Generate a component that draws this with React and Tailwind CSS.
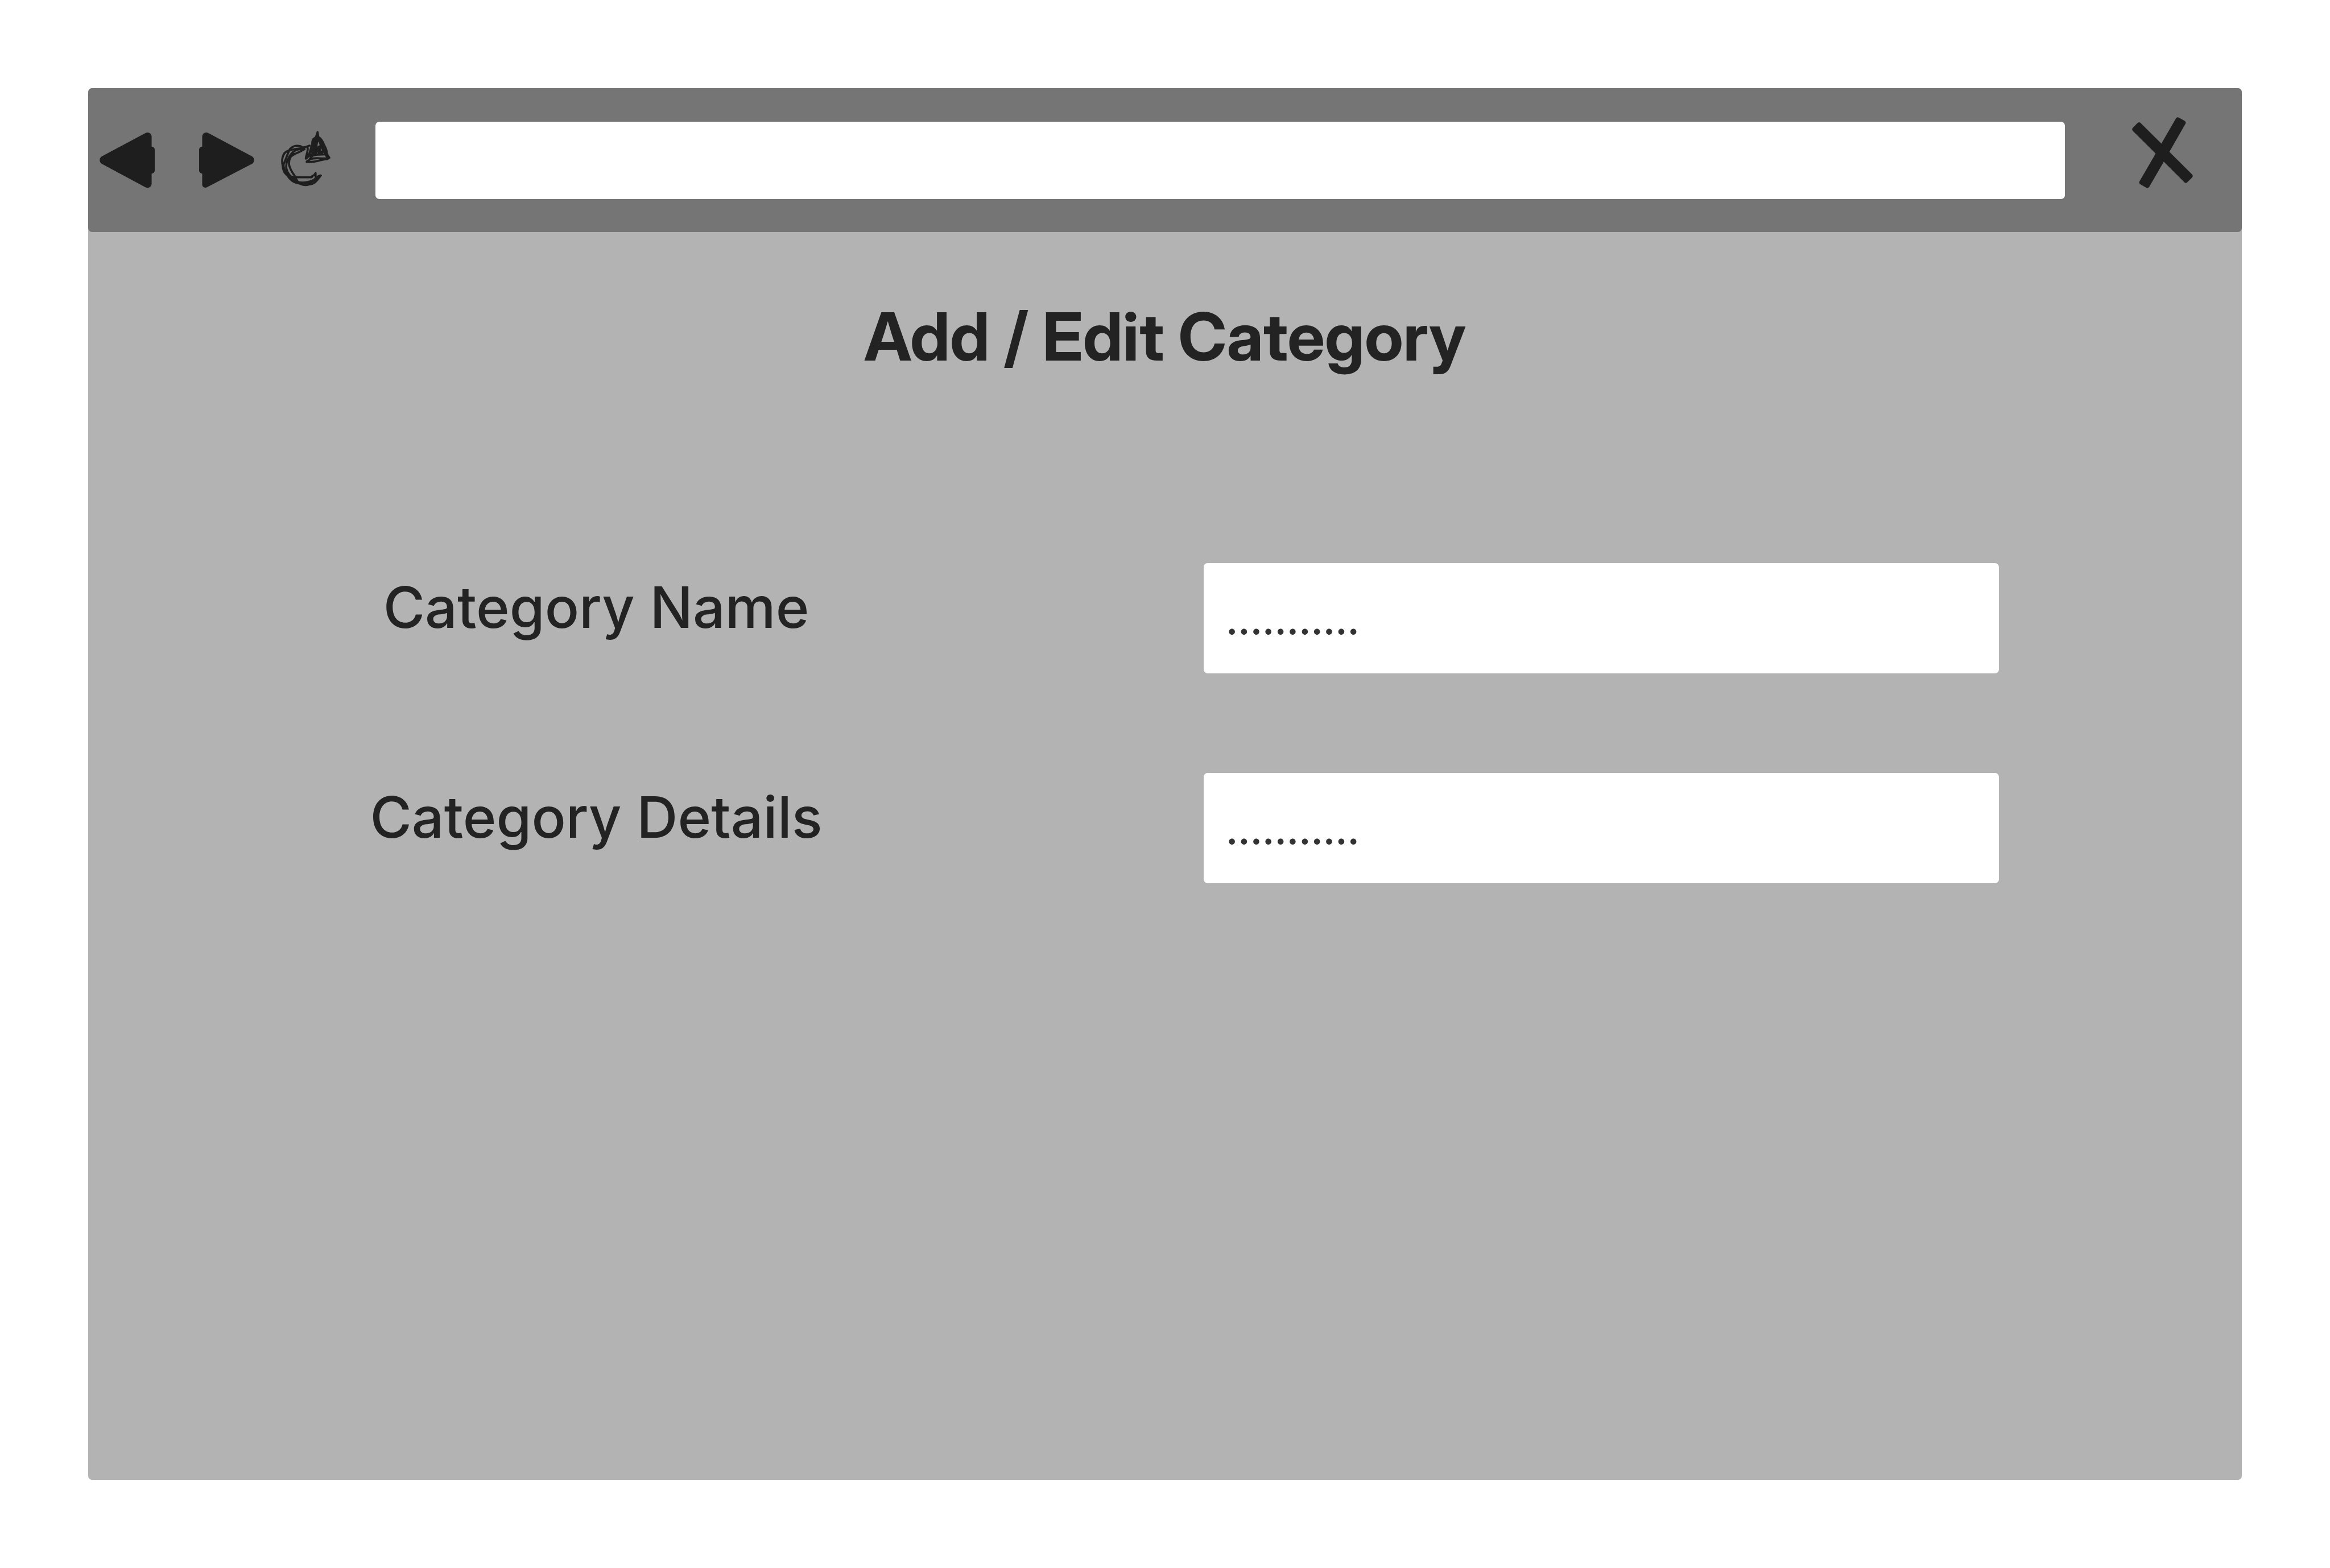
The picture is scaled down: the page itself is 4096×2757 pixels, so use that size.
import React from "react";

function BackIcon() {
  return (
    <svg viewBox="144 432 480 480" className="h-[97px] w-[97px]" fill="currentColor" aria-hidden="true">
      <path d="M543 437 L163 640 A38 38 0 0 0 163 704 L543 908 A36 36 0 0 0 597 878 V789 A27 27 0 0 0 624 764 V580 A27 27 0 0 0 597 554 V465 A36 36 0 0 0 543 437Z" />
    </svg>
  );
}

function ForwardIcon() {
  return (
    <svg viewBox="1008 432 480 480" className="h-[97px] w-[97px]" fill="currentColor" aria-hidden="true">
      <path d="M1089 437 L1469 640 A38 38 0 0 1 1469 704 L1076 908 A27 27 0 0 1 1035 886 V789 A27 27 0 0 1 1008 764 V580 A27 27 0 0 1 1035 554 V465 A36 36 0 0 1 1089 437Z" />
    </svg>
  );
}

function ReloadIcon() {
  return (
    <svg
      viewBox="100 110 432 524"
      className="h-[106px] w-[87px]"
      fill="none"
      stroke="currentColor"
      strokeWidth="18"
      strokeLinecap="round"
      strokeLinejoin="round"
      aria-hidden="true"
    >
      {/* sketched ring */}
      <path d="M350 243 L312 256 L290 259 C262 236 208 238 178 274 C156 310 146 360 122 405" />
      <path d="M300 264 C250 268 200 275 165 287 C106 302 106 380 114 415 C118 470 134 496 170 508 C190 514 220 520 250 520 L368 519 L374 508 L390 500 L402 482 L402 530" />
      <path d="M305 274 C260 304 196 318 182 346 C160 390 164 430 220 508 C234 540 244 562 262 575" />
      <path d="M300 269 C230 274 206 292 184 322 C150 370 142 410 146 440 C150 465 165 490 186 514" />
      <path d="M200 316 L215 314 M270 278 L290 272" />
      <path d="M122 405 C122 460 140 490 158 506 C186 556 230 572 290 577 C330 578 350 570 402 540 L447 504 C425 504 418 516 402 530 C370 558 300 574 250 562 C210 540 190 518 165 500 C146 484 130 460 124 430" />
      <path d="M275 580 C305 594 325 590 350 581 C395 580 415 545 447 504" />
      <path d="M172 518 L240 560 M185 514 L235 548" />
      {/* arrow head */}
      <path d="M332 262 C338 290 318 330 316 357 C330 357 342 330 350 310 L366 250" />
      <path d="M419 125 L416 140 L404 168 M419 125 L425 165" />
      <path
        fill="currentColor"
        fillRule="evenodd"
        strokeWidth="0"
        d="M398 166 C372 176 362 194 364 240 L352 270 L336 320 L338 346 L352 340 L348 366 L378 341 C400 330 440 332 482 329 L496 350 L525 352 L510 318 C510 280 494 250 486 238 C474 205 456 176 436 164Z M425 207 L438 238 L418 250 C421 235 420 222 425 207Z M446 265 C452 268 458 278 459 289 L454 288Z M362 303 l4 8 h-8Z M418 303 l6 7 h-9Z M469 306 l5 8 h-9Z"
      />
      <path d="M366 338 L345 370 C330 376 322 380 325 386 C350 386 390 386 420 377 C450 370 480 360 505 360 L522 349 L504 320" />
      <path d="M354 364 C380 348 420 352 460 355 L505 355" />
    </svg>
  );
}

function CloseIcon() {
  return (
    <svg viewBox="228 96 177 256" className="h-[155px] w-[107px]" fill="currentColor" aria-hidden="true">
      <path d="M230 138.7 Q226.6 134 230 130.5 L243 116.7 Q248.6 111.5 253.8 116.7 L313.3 176 L355.8 102.3 Q359 97.3 364.7 100.7 L381 109.7 Q386 113 383.2 118.7 L336.6 200 L402.8 265.7 Q406.6 270.3 402.5 274.7 L389 288 Q384.3 293 380.3 288.7 L320.3 228.7 L277.8 302 Q273.5 307.3 268.5 304 L252 294.3 Q247 291 250 285.3 L296.7 205Z" />
    </svg>
  );
}

function Field({ id, label }) {
  return (
    <div className="grid grid-cols-[92fr_9fr_72fr_22fr]">
      <label htmlFor={id} className="self-start text-center text-[100px] leading-[156px] font-medium">
        {label}
      </label>
      <input
        id={id}
        type="text"
        defaultValue="..........."
        className="col-start-3 h-[194px] w-full min-w-0 rounded-[7px] bg-white px-[39px] pt-1.5 text-[67px] font-semibold text-[#333333] outline-none"
      />
    </div>
  );
}

export default function App() {
  return (
    <div className="flex min-h-screen bg-white p-[155px] font-['Inter',sans-serif] text-[#232323]">
      <div className="flex flex-1 flex-col rounded-[7px] bg-[#b3b3b3]">
        <header className="flex h-[253px] items-center rounded-[7px] bg-[#757575] pr-[86px] pl-5 text-[#1e1e1e]">
          <button type="button" aria-label="Back">
            <BackIcon />
          </button>
          <button type="button" aria-label="Forward" className="ml-[78px]">
            <ForwardIcon />
          </button>
          <button type="button" aria-label="Reload" className="ml-[47px]">
            <ReloadIcon />
          </button>
          <input
            type="text"
            aria-label="Address"
            className="ml-[79px] h-[136px] min-w-0 flex-1 rounded-[7px] bg-white px-10 text-[67px] outline-none"
          />
          <button type="button" aria-label="Close" className="ml-[118px]">
            <CloseIcon />
          </button>
        </header>
        <main className="pt-[114px]">
          <h1 className="text-center font-['Inter_Display','Inter',sans-serif] text-[117px] leading-[140px] font-bold">
            Add / Edit Category
          </h1>
          <form className="mt-[328px] flex flex-col gap-[175px]">
            <Field id="category-name" label="Category Name" />
            <Field id="category-details" label="Category Details" />
          </form>
        </main>
      </div>
    </div>
  );
}
